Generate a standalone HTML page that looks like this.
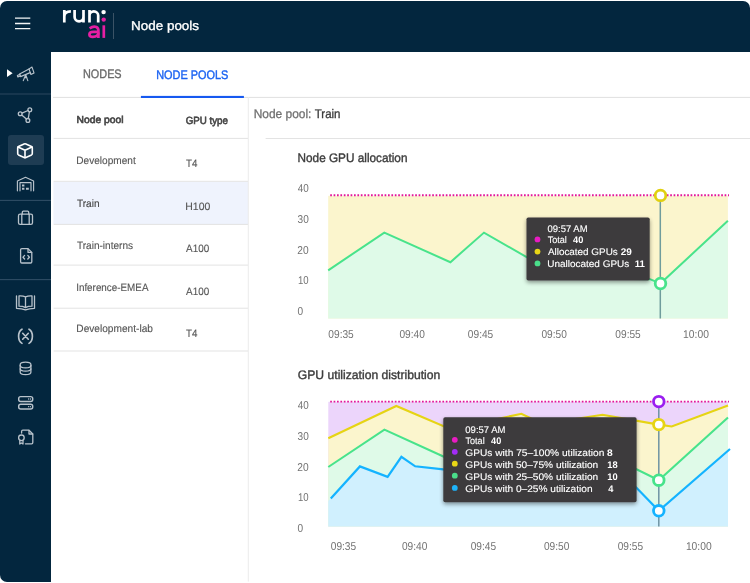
<!DOCTYPE html>
<html><head><meta charset="utf-8">
<style>
*{margin:0;padding:0;box-sizing:border-box}
html,body{width:750px;height:583px;background:#fff;overflow:hidden;font-family:"Liberation Sans",sans-serif;}
.abs{position:absolute}
#hdr{position:absolute;left:0;top:1px;width:750px;height:51px;background:#03263e;border-radius:7px 7px 0 0}
#side{position:absolute;left:0;top:51px;width:51px;height:530.5px;background:#03263e;border-radius:0 0 0 7px}
.sdiv{position:absolute;left:0;width:51px;height:2px;background:#14324a}
.t{position:absolute;white-space:nowrap;line-height:1;transform-origin:0 0}
svg{position:absolute;overflow:visible}
.hl{position:absolute;height:1px;background:#e2e2e2}
.ic{fill:none;stroke:#b8c2cb;stroke-width:1.3;stroke-linecap:round;stroke-linejoin:round}
.dot{position:absolute;width:5.8px;height:5.8px;border-radius:50%}
</style></head><body>
<div id="hdr"></div>
<div id="side"></div>
<div class="abs" style="left:7.5px;top:135.3px;width:36.5px;height:29.7px;border-radius:3px;background:#1e3c53"></div>

<svg id="icons" width="60" height="583" style="left:0;top:0" viewBox="0 0 60 583">
 <rect x="0" y="93" width="51" height="2" fill="#17364e"/>
 <rect x="0" y="199.85" width="51" height="1.1" fill="#2f4d64"/>
 <rect x="0" y="279.05" width="51" height="1.1" fill="#2f4d64"/>
 <g stroke="#f4f6f8" stroke-width="1.3" fill="none">
  <path d="M15 18.2H30.3M15 23.5H30.3M15 28.7H30.3"/>
 </g>
 <path d="M7 69.3V77.1L12.6 73.2Z" fill="#fff"/>
 <g class="ic" style="stroke-width:1.15">
  <path d="M29 69 L32 67.1 L34 72.9 L30.9 74.4 Z"/>
  <path d="M29 69 L19.6 74 L20.6 76.6 L30.2 72.6"/>
  <path d="M19.9 74.4 L17.4 75.5 L17.9 77 L20.4 76"/>
  <path d="M25.7 74.6 L23.3 80.6 M25.7 74.6 L27.8 80.6 M24.4 77.6 H26.9"/>
 </g>
 <g class="ic">
  <circle cx="29.8" cy="109.8" r="1.9"/><circle cx="20.2" cy="113.8" r="1.9"/><circle cx="27.9" cy="120.4" r="1.9"/>
  <path d="M22 113.1 L28 110.5 M21.7 115.1 L26.4 119.1 M29.4 111.7 L28.3 118.5"/>
 </g>
 <g class="ic" style="stroke:#fff;stroke-width:1.6">
  <path d="M24.1 143.9 Q25 143.5 25.9 143.9 L31.5 146.5 Q32.3 146.9 32.3 147.8 V153.6 Q32.3 154.5 31.5 154.9 L25.9 157.5 Q25 157.9 24.1 157.5 L18.5 154.9 Q17.7 154.5 17.7 153.6 V147.8 Q17.7 146.9 18.5 146.5 Z"/>
  <path d="M18 147 L25 150.3 L32 147 M25 150.3 V157.6"/>
 </g>
 <g class="ic" style="stroke-width:1.15">
  <path d="M17.4 190.8 V181 L25.5 177.3 L33.6 181 V190.8"/>
  <path d="M20 190.8 V182.6 H31 V190.8"/>
  <path d="M22 184.4 h2.4 v2 h-2.4z M22 187.8 h2.4 v2 h-2.4z M26 187.8 h2.8 v2 h-2.8z" style="fill:#b8c2cb;stroke:none"/>
 </g>
 <g class="ic">
  <rect x="18.5" y="214.2" width="14" height="10.2" rx="1.6"/>
  <path d="M22.3 214.2 V212.2 Q22.3 211.2 23.3 211.2 H27.7 Q28.7 211.2 28.7 212.2 V214.2 M21.8 214.2 V224.4 M29.2 214.2 V224.4"/>
 </g>
 <g class="ic">
  <path d="M21.8 248.6 H28 L31.8 252.4 V261.8 Q31.8 263 30.6 263 H21.8 Q20.6 263 20.6 261.8 V249.8 Q20.6 248.6 21.8 248.6 Z"/>
  <path d="M28 248.8 V252.4 H31.6" />
  <path d="M24.6 255.4 L23 257.2 L24.6 259 M27.8 255.4 L29.4 257.2 L27.8 259"/>
 </g>
 <g class="ic">
  <path d="M19 295.9 Q23 295.7 25.5 296.8 Q28 295.7 32 295.9 V306.2 Q28 306.2 25.5 307.6 Q23 306.2 19 306.2 Z M25.5 296.8 V307.6"/>
  <path d="M16.5 296 V308.3 Q22 308.3 25.5 309.9 Q29 308.3 34.5 308.3 V296"/>
 </g>
 <g class="ic" style="stroke-width:1.65">
  <path d="M22 329.2 Q18.6 331.2 18.6 336.3 Q18.6 341.4 22 343.4 M29 329.2 Q32.4 331.2 32.4 336.3 Q32.4 341.4 29 343.4"/>
  <path d="M22.7 333.3 L28.3 339.2 M28.3 333.3 L22.7 339.2"/>
 </g>
 <g class="ic">
  <path d="M20.2 364.6 Q20.2 362.2 25.55 362.2 Q30.9 362.2 30.9 364.6 V372.3 Q30.9 374.7 25.55 374.7 Q20.2 374.7 20.2 372.3 Z"/>
  <path d="M20.2 365.4 Q20.2 367.8 25.55 367.8 Q30.9 367.8 30.9 365.4 M20.2 368.8 Q20.2 371.2 25.55 371.2 Q30.9 371.2 30.9 368.8"/>
 </g>
 <g class="ic">
  <rect x="18.7" y="396.6" width="14" height="4.8" rx="2" style="stroke-width:1.45"/>
  <rect x="18.7" y="404.3" width="14" height="4.8" rx="2" style="stroke-width:1.45"/>
  <path d="M28.6 399 h0.01 M30.4 399 h0.01 M28.6 406.7 h0.01 M30.4 406.7 h0.01" style="stroke-width:1.3"/>
 </g>
 <g class="ic">
  <path d="M21.6 433 V431.4 Q21.6 430.2 22.8 430.2 H29 L32.8 434 V442.6 Q32.8 443.8 31.6 443.8 H25.4"/>
  <path d="M29 430.4 V434 H32.6"/>
  <circle cx="21.4" cy="437.8" r="2.8"/>
  <path d="M19.8 440.6 V444 L21.4 443 L23 444 V440.6"/>
 </g>
</svg>

<svg id="logo" width="130" height="52" style="left:0;top:0" viewBox="0 0 130 52">
 <g fill="none" stroke="#fff" stroke-width="2.7">
  <path d="M64.3 22.5 V9.9 M64.3 16.4 Q64.3 11.3 70.9 11.3"/>
  <path d="M74.6 9.9 V17.1 A4.45 4.2 0 0 0 83.5 17.1 M83.5 9.9 V22.5"/>
  <path d="M89.5 22.5 V9.9 M89.5 15.6 A4.35 4.2 0 0 1 98.2 15.6 V22.5"/>
 </g>
 <circle cx="103.6" cy="12.1" r="2.2" fill="#fff"/>
 <circle cx="103.7" cy="19.6" r="2.2" fill="#e61fa3"/>
 <g fill="none" stroke="#e61fa3" stroke-width="2.7">
  <path d="M89.6 28.3 Q93.4 25.6 96.4 27 Q98.4 28 98.4 30.6 V37.9"/>
  <path d="M98.4 31.9 H93.2 Q89.4 31.9 89.4 34.5 Q89.4 36.9 92.8 36.9 Q98.4 36.9 98.4 32.6"/>
  <path d="M103.8 25.3 V37.9"/>
 </g>
</svg>
<div class="abs" style="left:113px;top:13px;width:1px;height:26px;background:#3b5366"></div>

<!-- tabs/table lines -->
<svg id="lines" width="750" height="583" style="left:0;top:0" viewBox="0 0 750 583">
 <rect x="53.4" y="181.8" width="194.6" height="42.2" fill="#eff3fd"/>
 <g fill="#e3e3e3">
  <rect x="53" y="96.9" width="697" height="1.1"/>
  <rect x="53.6" y="137.9" width="194.4" height="1"/>
  <rect x="53.6" y="180.8" width="194.4" height="1"/>
  <rect x="53.6" y="223.9" width="194.4" height="1"/>
  <rect x="53.6" y="264.6" width="194.4" height="1"/>
  <rect x="53.6" y="307.7" width="194.4" height="1"/>
  <rect x="53.6" y="350.5" width="194.4" height="1"/>
  <rect x="265.6" y="138" width="485" height="1"/>
 </g>
 <rect x="247.8" y="97" width="1" height="484.6" fill="#ececec"/>
 <rect x="140.9" y="95.9" width="103" height="2.1" fill="#1659f0"/>
</svg>
<svg id="charts" width="750" height="583" style="left:0;top:0" viewBox="0 0 750 583">
 <!-- chart 1 -->
 <rect x="328.2" y="195.8" width="399.7" height="122.7" fill="#fbf5cd"/>
 <path d="M328.2 270.3 L384.3 232.6 L450.4 262.2 L484 232.6 L563 278 L650 279.2 L660.4 283.5 L727.9 220.8 V318.5 H328.2 Z" fill="#dffae8"/>
 <path d="M328.2 270.3 L384.3 232.6 L450.4 262.2 L484 232.6 L563 278 L650 279.2 L660.4 283.5 L727.9 220.8" fill="none" stroke="#48e38b" stroke-width="2" stroke-linejoin="miter"/>
 <path d="M330.2 195.2 H729" stroke="#e3169a" stroke-width="1.9" stroke-dasharray="1.7 1.7" fill="none"/>
 <path d="M660.3 195.4 V318.5" stroke="#6f9c9c" stroke-width="1.5"/>
 <circle cx="660.5" cy="195.4" r="5.3" fill="#fff" stroke="#e0d010" stroke-width="2.8"/>
 <circle cx="660.5" cy="283.5" r="5.3" fill="#fff" stroke="#48e38b" stroke-width="2.8"/>

 <!-- chart 2 -->
 <rect x="328.3" y="401.8" width="399.7" height="124.7" fill="#ecd5fb"/>
 <path d="M328.3 438.2 L396.3 406 L450 429 L521.4 413.8 L543 424 L602.5 414.7 L658.8 424.6 L671.7 426.5 L728 405.4 V526.5 H328.3 Z" fill="#fbf5cd"/>
 <path d="M328.3 467 L384.4 429.6 L450 459.5 L484 440 L560 446 L636 469.1 L658.8 480.2 L728 417.5 V526.5 H328.3 Z" fill="#dffae8"/>
 <path d="M328.3 501 L330.8 498.5 L359.9 466.4 L387.6 476.9 L401.4 456.8 L415.2 466.3 L443.3 469.4 L520 476 L636 487.2 L658.8 510.8 L728 450.8 V526.5 H328.3 Z" fill="#d0f0fe"/>
 <path d="M328.3 438.2 L396.3 406 L450 429 L521.4 413.8 L543 424 L602.5 414.7 L658.8 424.6 L671.7 426.5 L728 405.4" fill="none" stroke="#e6d414" stroke-width="2.1" stroke-linejoin="miter"/>
 <path d="M328.3 467 L384.4 429.6 L450 459.5 L484 440 L560 446 L636 469.1 L658.8 480.2 L728 417.5" fill="none" stroke="#48e38b" stroke-width="2.1"/>
 <path d="M330.8 498.5 L359.9 466.4 L387.6 476.9 L401.4 456.8 L415.2 466.3 L443.3 469.4 L520 476 L636 487.2 L658.8 510.8 L730 449" fill="none" stroke="#14b3ff" stroke-width="2.2"/>
 <path d="M330.2 401.6 H729" stroke="#e3169a" stroke-width="1.9" stroke-dasharray="1.7 1.7" fill="none"/>
 <path d="M658.8 401.6 V526.5" stroke="#6f93a3" stroke-width="1.5"/>
 <circle cx="658.8" cy="401.6" r="5.3" fill="#fff" stroke="#9a1ef0" stroke-width="2.8"/>
 <circle cx="658.8" cy="424.6" r="5.3" fill="#fff" stroke="#e6d414" stroke-width="2.8"/>
 <circle cx="658.8" cy="480.2" r="5.3" fill="#fff" stroke="#48e38b" stroke-width="2.8"/>
 <circle cx="658.8" cy="510.8" r="5.3" fill="#fff" stroke="#14b3ff" stroke-width="2.8"/>
</svg>

<!-- tooltips -->
<svg id="tips" width="750" height="583" style="left:0;top:0" viewBox="0 0 750 583">
 <defs><filter id="sh" x="-10%" y="-10%" width="120%" height="130%"><feGaussianBlur in="SourceAlpha" stdDeviation="2.1"/><feOffset dy="2"/><feComponentTransfer><feFuncA type="linear" slope="0.42"/></feComponentTransfer><feMerge><feMergeNode/><feMergeNode in="SourceGraphic"/></feMerge></filter></defs>
 <rect x="526.5" y="217.5" width="123.2" height="63.1" rx="1.8" fill="#3c3b3d" filter="url(#sh)"/>
 <circle cx="537.5" cy="239.4" r="2.9" fill="#e81cc2"/>
 <circle cx="537.5" cy="251.6" r="2.9" fill="#e8d616"/>
 <circle cx="537.5" cy="263.4" r="2.9" fill="#4ade8a"/>
 <rect x="443.3" y="417.3" width="193.3" height="85" rx="1.8" fill="#3c3b3d" filter="url(#sh)"/>
 <circle cx="454.8" cy="439.8" r="2.9" fill="#e81cc2"/>
 <circle cx="454.8" cy="451.8" r="2.9" fill="#a32cf5"/>
 <circle cx="454.8" cy="463.7" r="2.9" fill="#e8d616"/>
 <circle cx="454.8" cy="475.7" r="2.9" fill="#4ade8a"/>
 <circle cx="454.8" cy="487.9" r="2.9" fill="#1eb3fa"/>
</svg>

<svg id="texts" width="750" height="583" style="left:0;top:0;will-change:transform" viewBox="0 0 750 583" font-family="Liberation Sans, sans-serif" text-rendering="geometricPrecision">
<text id="ttl" transform="translate(131.07,30.30) scale(1.0421,1)" font-size="12.9" fill="#fff" stroke="#fff" stroke-width="0.35">Node pools</text>
<text id="tab1" transform="translate(83.00,78.30) scale(0.8762,1)" font-size="12.4" fill="#6a6a6a" stroke="#6a6a6a" stroke-width="0.35">NODES</text>
<text id="tab2" transform="translate(156.20,78.50) scale(0.8812,1)" font-size="12.4" fill="#1b63f2" stroke="#1b63f2" stroke-width="0.4">NODE POOLS</text>
<text id="th1" transform="translate(76.48,122.80) scale(1.0268,1)" font-size="10.05" fill="#464646" stroke="#464646" stroke-width="0.62">Node pool</text>
<text id="th2" transform="translate(185.71,124.10) scale(0.9372,1)" font-size="10.4" fill="#464646" stroke="#464646" stroke-width="0.62">GPU type</text>
<text id="r1a" transform="translate(76.34,164.20) scale(0.9468,1)" font-size="10.65" fill="#555555" stroke="#555555" stroke-width="0.12">Development</text>
<text id="r1b" transform="translate(185.92,166.80) scale(0.9167,1)" font-size="10.65" fill="#555555" stroke="#555555" stroke-width="0.12">T4</text>
<text id="r2a" transform="translate(76.91,207.30) scale(0.9478,1)" font-size="10.65" fill="#444" stroke="#444" stroke-width="0.12">Train</text>
<text id="r2b" transform="translate(185.31,210.00) scale(0.9835,1)" font-size="10.65" fill="#555555" stroke="#555555" stroke-width="0.12">H100</text>
<text id="r3a" transform="translate(76.91,248.50) scale(0.9473,1)" font-size="10.65" fill="#555555" stroke="#555555" stroke-width="0.12">Train-interns</text>
<text id="r3b" transform="translate(186.10,251.90) scale(0.9309,1)" font-size="10.65" fill="#555555" stroke="#555555" stroke-width="0.12">A100</text>
<text id="r4a" transform="translate(76.17,290.50) scale(0.9260,1)" font-size="10.65" fill="#555555" stroke="#555555" stroke-width="0.12">Inference-EMEA</text>
<text id="r4b" transform="translate(186.10,295.00) scale(0.9309,1)" font-size="10.65" fill="#555555" stroke="#555555" stroke-width="0.12">A100</text>
<text id="r5a" transform="translate(76.34,332.30) scale(0.9520,1)" font-size="10.65" fill="#555555" stroke="#555555" stroke-width="0.12">Development-lab</text>
<text id="r5b" transform="translate(185.92,336.60) scale(0.9167,1)" font-size="10.65" fill="#555555" stroke="#555555" stroke-width="0.12">T4</text>
<text id="np1" transform="translate(253.64,118.00) scale(0.9556,1)" font-size="12.5" fill="#707070" stroke="#707070" stroke-width="0.3">Node pool:</text>
<text id="np2" transform="translate(314.72,118.00) scale(0.9191,1)" font-size="12.5" fill="#3a3a3a" stroke="#3a3a3a" stroke-width="0.3">Train</text>
<text id="c1t" transform="translate(297.54,161.80) scale(0.9534,1)" font-size="12.35" fill="#3c3c3c" stroke="#3c3c3c" stroke-width="0.38">Node GPU allocation</text>
<text id="c2t" transform="translate(297.81,378.50) scale(0.9840,1)" font-size="12.35" fill="#3c3c3c" stroke="#3c3c3c" stroke-width="0.38">GPU utilization distribution</text>
<text id="y1_0" transform="translate(297.73,192.20) scale(0.8667,1)" font-size="11.4" fill="#737373">40</text>
<text id="y1_1" transform="translate(297.55,223.00) scale(0.8814,1)" font-size="11.4" fill="#737373">30</text>
<text id="y1_2" transform="translate(297.36,254.00) scale(0.8966,1)" font-size="11.4" fill="#737373">20</text>
<text id="y1_3" transform="translate(298.03,284.00) scale(0.8421,1)" font-size="11.4" fill="#737373">10</text>
<text id="y1_4" transform="translate(297.54,315.00) scale(0.8889,1)" font-size="11.4" fill="#737373">0</text>
<text id="y2_0" transform="translate(297.73,409.00) scale(0.8667,1)" font-size="11.4" fill="#737373">40</text>
<text id="y2_1" transform="translate(297.55,440.20) scale(0.8814,1)" font-size="11.4" fill="#737373">30</text>
<text id="y2_2" transform="translate(297.36,471.20) scale(0.8966,1)" font-size="11.4" fill="#737373">20</text>
<text id="y2_3" transform="translate(298.03,501.00) scale(0.8421,1)" font-size="11.4" fill="#737373">10</text>
<text id="y2_4" transform="translate(297.54,532.20) scale(0.8889,1)" font-size="11.4" fill="#737373">0</text>
<text id="x1_0" transform="translate(328.34,337.60) scale(0.8913,1)" font-size="11.4" fill="#737373">09:35</text>
<text id="x1_1" transform="translate(399.44,337.60) scale(0.8913,1)" font-size="11.4" fill="#737373">09:40</text>
<text id="x1_2" transform="translate(467.84,337.60) scale(0.8913,1)" font-size="11.4" fill="#737373">09:45</text>
<text id="x1_3" transform="translate(541.44,337.60) scale(0.8913,1)" font-size="11.4" fill="#737373">09:50</text>
<text id="x1_4" transform="translate(615.34,337.60) scale(0.8913,1)" font-size="11.4" fill="#737373">09:55</text>
<text id="x1_5" transform="translate(683.08,337.60) scale(0.9044,1)" font-size="11.4" fill="#737373">10:00</text>
<text id="x2_0" transform="translate(330.74,550.30) scale(0.8913,1)" font-size="11.4" fill="#737373">09:35</text>
<text id="x2_1" transform="translate(401.94,550.30) scale(0.8913,1)" font-size="11.4" fill="#737373">09:40</text>
<text id="x2_2" transform="translate(470.64,550.30) scale(0.8913,1)" font-size="11.4" fill="#737373">09:45</text>
<text id="x2_3" transform="translate(543.94,550.30) scale(0.8913,1)" font-size="11.4" fill="#737373">09:50</text>
<text id="x2_4" transform="translate(617.64,550.30) scale(0.8913,1)" font-size="11.4" fill="#737373">09:55</text>
<text id="x2_5" transform="translate(685.88,550.30) scale(0.9044,1)" font-size="11.4" fill="#737373">10:00</text>
<text id="t1a" transform="translate(547.51,232.10) scale(0.9873,1)" font-size="9.6" fill="#fff" stroke="#fff" stroke-width="0.12">09:57 AM</text>
<text id="t1b" transform="translate(547.71,242.80) scale(0.9439,1)" font-size="9.6" fill="#fff" stroke="#fff" stroke-width="0.12">Total</text>
<text id="t1bv" transform="translate(573.01,242.80) scale(0.9608,1)" font-size="9.6" fill="#fff" font-weight="bold">40</text>
<text id="t1c" transform="translate(547.90,255.10) scale(1.0312,1)" font-size="9.6" fill="#fff" stroke="#fff" stroke-width="0.12">Allocated GPUs</text>
<text id="t1cv" transform="translate(620.78,255.10) scale(1.0400,1)" font-size="9.6" fill="#fff" font-weight="bold">29</text>
<text id="t1d" transform="translate(547.28,266.80) scale(1.0385,1)" font-size="9.6" fill="#fff" stroke="#fff" stroke-width="0.12">Unallocated GPUs</text>
<text id="t1dv" transform="translate(634.80,266.80) scale(1.0000,1)" font-size="9.6" fill="#fff" font-weight="bold">11</text>
<text id="t2a" transform="translate(465.30,433.00) scale(0.9924,1)" font-size="9.6" fill="#fff" stroke="#fff" stroke-width="0.12">09:57 AM</text>
<text id="t2b" transform="translate(465.51,443.90) scale(0.9439,1)" font-size="9.6" fill="#fff" stroke="#fff" stroke-width="0.12">Total</text>
<text id="t2bv" transform="translate(491.11,443.90) scale(0.9510,1)" font-size="9.6" fill="#fff" font-weight="bold">40</text>
<text id="t2c" transform="translate(465.28,455.70) scale(1.0599,1)" font-size="9.6" fill="#fff" stroke="#fff" stroke-width="0.12">GPUs with 75–100% utilization</text>
<text id="t2cv" transform="translate(607.07,455.70) scale(1.0652,1)" font-size="9.6" fill="#fff" font-weight="bold">8</text>
<text id="t2d" transform="translate(465.28,467.60) scale(1.0560,1)" font-size="9.6" fill="#fff" stroke="#fff" stroke-width="0.12">GPUs with 50–75% utilization</text>
<text id="t2dv" transform="translate(607.22,467.60) scale(0.9694,1)" font-size="9.6" fill="#fff" font-weight="bold">18</text>
<text id="t2e" transform="translate(465.28,479.60) scale(1.0560,1)" font-size="9.6" fill="#fff" stroke="#fff" stroke-width="0.12">GPUs with 25–50% utilization</text>
<text id="t2ev" transform="translate(607.22,479.60) scale(0.9694,1)" font-size="9.6" fill="#fff" font-weight="bold">10</text>
<text id="t2f" transform="translate(465.28,491.60) scale(1.0560,1)" font-size="9.6" fill="#fff" stroke="#fff" stroke-width="0.12">GPUs with 0–25% utilization</text>
<text id="t2fv" transform="translate(608.31,491.60) scale(0.9615,1)" font-size="9.6" fill="#fff" font-weight="bold">4</text>
</svg>
</body></html>
